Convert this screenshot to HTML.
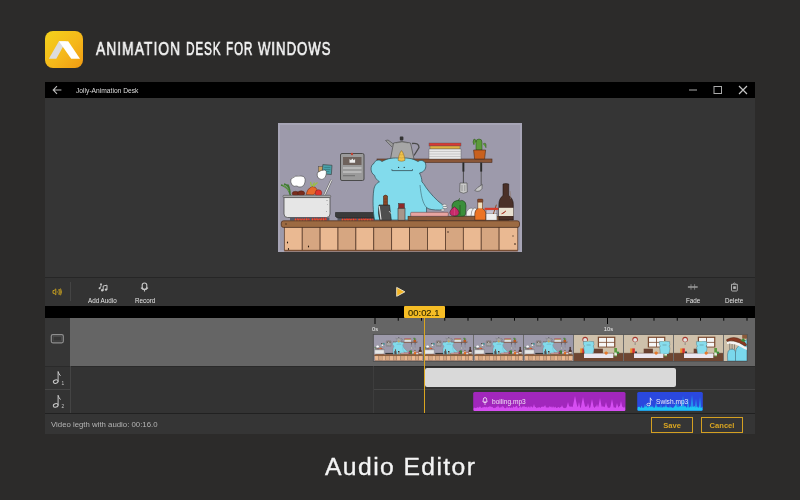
<!DOCTYPE html>
<html><head><meta charset="utf-8">
<style>
*{margin:0;padding:0;box-sizing:border-box}
html,body{width:800px;height:500px;overflow:hidden;background:#2c2b2a;font-family:"Liberation Sans",sans-serif}
.a{position:absolute}
.t{position:absolute;white-space:nowrap;line-height:1;will-change:transform}
</style></head><body>
<svg style="position:absolute;width:0;height:0">
<defs>
<symbol id="kitchen" viewBox="0 0 244 129" preserveAspectRatio="none">
<rect width="244" height="129" fill="#9d9aab"/><rect x="1" y="1" width="242" height="127" fill="none" stroke="#a7a5b6" stroke-width="2"/>
<!-- recipe card -->
<rect x="62.5" y="30.5" width="23.5" height="27" rx="1.5" fill="#9a9a9a" stroke="#4a4a4a" stroke-width="1"/>
<rect x="65" y="34" width="18.5" height="8" fill="#6e625c"/>
<path d="M71.5,36 l1.5,1.2 l1.3,-1.6 l1.3,1.6 l1.5,-1.2 v3.8 h-5.6z" fill="#eee"/>
<rect x="65" y="44" width="18.5" height="2" fill="#b8b8b8"/>
<rect x="65" y="48" width="18.5" height="2" fill="#b8b8b8"/>
<rect x="65" y="52" width="12" height="1.3" fill="#777"/>
<circle cx="74" cy="31" r="1.2" fill="#c04030"/>
<!-- sticky notes -->
<rect x="40.4" y="43.6" width="5.4" height="6" fill="#c8a060" stroke="#4a4a4a" stroke-width="0.5"/>
<rect x="44.5" y="41.9" width="9.2" height="9.3" fill="#4aa0a8" stroke="#3a3a3a" stroke-width="0.6" transform="rotate(4 49 46.5)"/>
<path d="M46.3,44.5 h6 M46.3,46.5 h6 M46.3,48.5 h5" stroke="#2a6a70" stroke-width="0.5"/>
<path d="M39.5,49.5 q4,-3 7.5,-2.5 q2,1 1.3,4 q-0.5,4 -3.3,5.2 q-2,0.6 -3.5,-0.5 q-2.5,-1 -2.3,-3.5 q0,-1.5 0.3,-2.7z" fill="#fff" stroke="#444" stroke-width="0.6"/>
<!-- steam blob -->
<path d="M13,56 q4,-4 10,-3 q5,0 4,6 q-1,5 -5,5 q-2,0 -3,-1 q-3,1 -5,-1 q-2,-3 -1,-6z" fill="#fff" stroke="#444" stroke-width="0.6"/>
<!-- leek -->
<path d="M3,62 q5,1 8,6 l1.5,4.5 M6,61 q4,1 5.5,5 M9.5,61.5 q2.5,3 2.5,10" stroke="#3e7a30" stroke-width="1.5" fill="none"/>
<path d="M4.5,62 q4,1.5 6.5,6" stroke="#8ac060" stroke-width="0.6" fill="none"/>
<!-- pot contents -->
<ellipse cx="17.5" cy="70.6" rx="3.3" ry="2.3" fill="#7a2c1c" stroke="#3a1a10" stroke-width="0.4"/>
<ellipse cx="23.2" cy="70.3" rx="3.5" ry="2.5" fill="#7a2c1c" stroke="#3a1a10" stroke-width="0.4"/>
<path d="M28,71.5 q1,-6 6,-8 q4,0 5,3 q0,4 -4,5.5z" fill="#e8682a" stroke="#5a2a1a" stroke-width="0.5"/>
<path d="M33.5,63.5 l-1,-4.5 M35,63.5 l4.5,-4 M34.5,63 l2,-3.5" stroke="#9ac040" stroke-width="1.2"/>
<circle cx="40.5" cy="70" r="3.3" fill="#e0342e" stroke="#5a1a1a" stroke-width="0.4"/>
<path d="M46.5,72 L53.5,57" stroke="#555" stroke-width="2"/>
<path d="M46.5,72 L53.5,57" stroke="#e8e8e8" stroke-width="1.1"/>
<!-- pot -->
<path d="M6,74.5 h46 v16.5 q0,3.5 -3.5,3.5 h-39 q-3.5,0 -3.5,-3.5z" fill="#e6e6e6" stroke="#4a4a4a" stroke-width="0.8"/>
<rect x="5" y="72.3" width="47.7" height="2.3" rx="1" fill="#a8a8a8" stroke="#444" stroke-width="0.5"/>
<path d="M49,77 v1 M49.5,81 v0.6 M48.5,88 v0.8" stroke="#666" stroke-width="0.6"/>
<!-- flames -->
<rect x="12" y="94.6" width="39.4" height="3" fill="#555a66"/><rect x="59.5" y="94.6" width="37.5" height="3" fill="#555a66"/>
<path d="M16.4,97.6 q0.6,-2.6 1.2,-2.6 q0.6,0 1.2,2.6z" fill="#e8382a"/><path d="M18.6,97.6 q0.6,-2.8 1.2,-2.8 q0.6,0 1.2,2.8z" fill="#e8382a"/><path d="M20.8,97.6 q0.6,-2.7 1.2,-2.7 q0.6,0 1.2,2.7z" fill="#e8382a"/><path d="M23.0,97.6 q0.6,-2.7 1.2,-2.7 q0.6,0 1.2,2.7z" fill="#e8382a"/><path d="M25.2,97.6 q0.6,-2.7 1.2,-2.7 q0.6,0 1.2,2.7z" fill="#e8382a"/><path d="M27.4,97.6 q0.6,-3.0 1.2,-3.0 q0.6,0 1.2,3.0z" fill="#e8382a"/><path d="M29.6,97.6 q0.6,-2.5 1.2,-2.5 q0.6,0 1.2,2.5z" fill="#e8382a"/><path d="M16.9,97.2 H30.1" stroke="#f8b040" stroke-width="0.9" stroke-dasharray="1.2 1.6"/><path d="M33.3,97.6 q0.6,-2.9 1.2,-2.9 q0.6,0 1.2,2.9z" fill="#e8382a"/><path d="M35.5,97.6 q0.6,-3.0 1.2,-3.0 q0.6,0 1.2,3.0z" fill="#e8382a"/><path d="M37.7,97.6 q0.6,-3.2 1.2,-3.2 q0.6,0 1.2,3.2z" fill="#e8382a"/><path d="M39.9,97.6 q0.6,-2.5 1.2,-2.5 q0.6,0 1.2,2.5z" fill="#e8382a"/><path d="M42.1,97.6 q0.6,-3.0 1.2,-3.0 q0.6,0 1.2,3.0z" fill="#e8382a"/><path d="M44.3,97.6 q0.6,-3.3 1.2,-3.3 q0.6,0 1.2,3.3z" fill="#e8382a"/><path d="M46.5,97.6 q0.6,-3.3 1.2,-3.3 q0.6,0 1.2,3.3z" fill="#e8382a"/><path d="M33.8,97.2 H47.0" stroke="#f8b040" stroke-width="0.9" stroke-dasharray="1.2 1.6"/><path d="M63.3,97.6 q0.6,-2.7 1.2,-2.7 q0.6,0 1.2,2.7z" fill="#e8382a"/><path d="M65.5,97.6 q0.6,-2.6 1.2,-2.6 q0.6,0 1.2,2.6z" fill="#e8382a"/><path d="M67.7,97.6 q0.6,-3.3 1.2,-3.3 q0.6,0 1.2,3.3z" fill="#e8382a"/><path d="M69.9,97.6 q0.6,-2.8 1.2,-2.8 q0.6,0 1.2,2.8z" fill="#e8382a"/><path d="M72.1,97.6 q0.6,-2.3 1.2,-2.3 q0.6,0 1.2,2.3z" fill="#e8382a"/><path d="M74.3,97.6 q0.6,-3.1 1.2,-3.1 q0.6,0 1.2,3.1z" fill="#e8382a"/><path d="M76.5,97.6 q0.6,-2.3 1.2,-2.3 q0.6,0 1.2,2.3z" fill="#e8382a"/><path d="M63.8,97.2 H77.0" stroke="#f8b040" stroke-width="0.9" stroke-dasharray="1.2 1.6"/><path d="M80.0,97.6 q0.6,-2.5 1.2,-2.5 q0.6,0 1.2,2.5z" fill="#e8382a"/><path d="M82.2,97.6 q0.6,-2.9 1.2,-2.9 q0.6,0 1.2,2.9z" fill="#e8382a"/><path d="M84.4,97.6 q0.6,-3.0 1.2,-3.0 q0.6,0 1.2,3.0z" fill="#e8382a"/><path d="M86.6,97.6 q0.6,-3.4 1.2,-3.4 q0.6,0 1.2,3.4z" fill="#e8382a"/><path d="M88.8,97.6 q0.6,-2.6 1.2,-2.6 q0.6,0 1.2,2.6z" fill="#e8382a"/><path d="M91.0,97.6 q0.6,-2.8 1.2,-2.8 q0.6,0 1.2,2.8z" fill="#e8382a"/><path d="M93.2,97.6 q0.6,-2.6 1.2,-2.6 q0.6,0 1.2,2.6z" fill="#e8382a"/><path d="M80.5,97.2 H94.5" stroke="#f8b040" stroke-width="0.9" stroke-dasharray="1.2 1.6"/>
<!-- pan -->
<path d="M57.5,89.5 h42 l1,4 q-1,1.5 -4,1.5 h-35 q-3,0 -4,-1.5z" fill="#3a3a3a" stroke="#1e1e1e" stroke-width="0.6"/>
<path d="M100,91 h8" stroke="#555" stroke-width="2"/>
<!-- shelf -->
<rect x="99" y="36" width="115" height="3.4" fill="#8a5638" stroke="#4a2a1a" stroke-width="0.6"/>
<!-- kettle -->
<path d="M114,24 L107.5,17.5 L110,17 L115.5,21" fill="#9a9a9a" stroke="#4a4a4a" stroke-width="0.6"/>
<path d="M134,20.5 q7,-1 7,4 l-5,8" stroke="#4a4a4a" stroke-width="1.3" fill="none"/>
<path d="M112.5,36 L115.5,20 q8.5,-3 17,0 L136,36z" fill="#a6a6a6" stroke="#4a4a4a" stroke-width="0.7"/>
<path d="M118,20 q6,-2 12,0" stroke="#666" stroke-width="0.5" fill="none"/>
<rect x="121.8" y="13.6" width="3.6" height="3.8" rx="0.8" fill="#333"/>
<!-- plates -->
<rect x="151" y="20" width="32" height="3" fill="#d83a34" stroke="#555" stroke-width="0.4"/>
<rect x="152" y="23" width="30" height="3" fill="#e0b040" stroke="#555" stroke-width="0.4"/>
<rect x="151" y="26" width="32" height="10" fill="#e8e8e8" stroke="#555" stroke-width="0.4"/>
<path d="M151,28.5 h32 M151,31 h32 M151,33.5 h32" stroke="#999" stroke-width="0.4"/>
<!-- cactus -->
<path d="M198,27 v-8 q0,-3 3,-3 q3,0 3,3 v8z M196,22 q-2,-3 0,-6 q2,0 2,3 M205,21 q3,-2 3,1 v3" fill="#5c9a3a" stroke="#2a4a1a" stroke-width="0.5"/>
<path d="M195.6,27 h12 l-1,9 h-10z" fill="#c8601e" stroke="#4a2a1a" stroke-width="0.6"/>
<!-- utensils -->
<path d="M185.4,39.4 v21" stroke="#444" stroke-width="0.9"/>
<path d="M185.4,39.6 v9" stroke="#2a2a2a" stroke-width="1.9"/>
<path d="M182,60 h7 l0.3,9 q-3.8,2.5 -7.6,0z" fill="#c8c8c8" stroke="#444" stroke-width="0.6"/>
<path d="M184,62 v6 M186.8,62 v6" stroke="#777" stroke-width="0.6"/>
<path d="M203.2,39.4 v24" stroke="#555" stroke-width="0.9"/>
<path d="M203.2,39.6 v9" stroke="#2a2a2a" stroke-width="1.9"/>
<path d="M204.3,61.5 q0.5,5 -2.5,6.5 q-3,1 -5,-0.5 q2,-3 7.5,-6z" fill="#c8c8c8" stroke="#444" stroke-width="0.6"/>
<!-- monster -->
<path d="M96.6,52.4 C92,50 92,42 96,40.4 C97,37 101,36 104,38.5 C110,35 116,34.5 122.2,35.3 C128,34.5 134,35 140,38.5 C143,36 148,38 147.8,42.5 C148,46 146,49 141.5,50 C143,53 144,56 143.9,58.8 C146,61 147,63 148,64.5 C152,70 158,77 164,81.3 C166,82 168,83 167,85.5 C165.5,86.5 163.5,87 161.5,87 C156,87 151,86.8 148.5,84.5 L148.7,97 L96.6,97 C95,90 94.5,75 95.8,66.8 C96.5,62 99,60 101.4,58.8 C99,57 97,55 96.6,52.4 Z" fill="#82dbec" stroke="#2e4a52" stroke-width="0.7"/>
<path d="M142,62 C143,72 144.5,80 148.5,84.5" stroke="#2e4a52" stroke-width="0.5" fill="none"/>
<path d="M120,37.3 C120.5,33 122,29 123.5,27.6 C125,29 126.5,33 127,37.3 C124.5,38.5 122.5,38.5 120,37.3Z" fill="#f0c24a" stroke="#7a5a20" stroke-width="0.5"/>
<path d="M121,34.5 q2.5,1 5,0 M121.8,31.5 q1.8,0.8 3.4,0" stroke="#b08a30" stroke-width="0.4" fill="none"/>
<path d="M114.2,47.8 q-0.8,-0.8 -0.2,-1.6 M114.2,47.6 h20 M134.2,47.8 q0.8,-0.8 0.2,-1.6" stroke="#2a3a40" stroke-width="0.7" fill="none"/>
<circle cx="120.6" cy="44.4" r="0.6" fill="#2a3a40"/><circle cx="126.2" cy="44.4" r="0.6" fill="#2a3a40"/>
<ellipse cx="166.5" cy="82.3" rx="2.3" ry="1.1" fill="#eee" stroke="#555" stroke-width="0.4"/><ellipse cx="167" cy="84.6" rx="2.3" ry="1.1" fill="#eee" stroke="#555" stroke-width="0.4"/><ellipse cx="164.8" cy="87" rx="2" ry="1" fill="#eee" stroke="#555" stroke-width="0.4"/>
<!-- cleaver -->
<path d="M101,82 l10.5,0 l1.8,15.3 h-11.5 q-2.3,-7 -0.8,-15.3z" fill="#4e4e4e" stroke="#1e1e1e" stroke-width="0.6"/>
<path d="M101.2,83 l1.8,13.5" stroke="#e6e6e6" stroke-width="1.1"/>
<path d="M111,88 l2.5,3" stroke="#ccc" stroke-width="0.8"/>
<path d="M105.5,82 v-9 q2,-1.8 4,0 v9z" fill="#8a4a2a" stroke="#3a1a0a" stroke-width="0.5"/>
<path d="M106.2,76 h2.6 M106.2,79 h2.6" stroke="#5a2a1a" stroke-width="0.4"/>
<!-- shaker -->
<path d="M120,85 h7 v12.3 h-7z" fill="#a8968a" stroke="#333" stroke-width="0.6"/>
<rect x="120.6" y="80.6" width="5.8" height="4.6" fill="#8e2a2a" stroke="#333" stroke-width="0.5"/>
<!-- boards -->
<rect x="130" y="93.2" width="101" height="4.2" fill="#8a5a3a" stroke="#3a2a1a" stroke-width="0.5"/>
<rect x="132.6" y="89.3" width="37.7" height="4" rx="1" fill="#e8a4a0" stroke="#5a3a3a" stroke-width="0.5"/>
<!-- pepper & onion -->
<path d="M174,82 q1,-4 5,-4.5 q2,-0.5 3,0.5 q1,-1 3,-0.3 q3,1 3,5 l-0.5,8.5 q-0.5,2 -2.5,2 h-8 q-2.5,0 -2.8,-2.5z" fill="#3a8e3a" stroke="#1e3a1a" stroke-width="0.6"/>
<path d="M180.5,78 q0,-2 1.5,-2.5 M182,82 v10" stroke="#2a5a22" stroke-width="0.9" fill="none"/>
<path d="M176.4,83.8 q-4.5,3 -4.6,5.5 q0,3.7 4.6,3.7 q4.6,0 4.6,-3.7 q0,-2.5 -4.6,-5.5z" fill="#c82a6a" stroke="#3a1a2a" stroke-width="0.5"/>
<path d="M176.4,85 v7" stroke="#e070a0" stroke-width="0.4"/>
<!-- eggs -->
<path d="M188.2,93 q-0.5,-5 3,-7.5 q3,-1.5 4,1 l-1.5,6.5z" fill="#f2f2f2" stroke="#555" stroke-width="0.5"/>
<path d="M193,93 q0,-6 3,-8 q3,-0.5 3,2 v6z" fill="#f2f2f2" stroke="#555" stroke-width="0.5"/>
<!-- sauce bottle -->
<path d="M199.9,79 h4.6 v6.5 q3.3,1.5 3.3,5 v6.6 h-11 v-6.6 q0,-3.5 3.1,-5z" fill="#ec7424" stroke="#4a2a1a" stroke-width="0.6"/>
<rect x="200.2" y="79.3" width="4" height="6" fill="#efe2c4"/>
<rect x="199.5" y="76.1" width="5.4" height="3" rx="0.8" fill="#8a4a2a" stroke="#3a1a0a" stroke-width="0.4"/>
<!-- box -->
<rect x="208.1" y="86.9" width="10.8" height="10.2" fill="#c6c4d4" stroke="#555" stroke-width="0.4"/>
<rect x="208.1" y="90.4" width="10.8" height="6.7" fill="#eeeeee" stroke="#555" stroke-width="0.4"/>
<path d="M215.3,91 L218.4,81.7" stroke="#8a4a2a" stroke-width="1"/>
<rect x="206.6" y="84.8" width="13.8" height="2.1" fill="#d83a2a"/>
<!-- wine bottle -->
<path d="M225,61 q2.8,-0.8 5.7,0 v11.5 q4.6,3 4.6,9 v15.6 h-14.4 v-15.6 q0,-6 4.1,-9z" fill="#4a3028" stroke="#1e1410" stroke-width="0.6"/>
<rect x="221" y="84.8" width="14.3" height="8.2" fill="#e8e0d0"/>
<path d="M223.5,90.8 q2.5,-0.5 4.5,-3" stroke="#c03a2a" stroke-width="1"/>
<path d="M232,68 q1,4 0.5,8" stroke="#8a7060" stroke-width="0.5" fill="none"/>
<!-- counter -->
<rect x="3.3" y="97.8" width="238.2" height="6.6" rx="2.2" fill="#9c6a42" stroke="#4a2a1a" stroke-width="0.7"/>
<g stroke="#4e3222" stroke-width="0.7"><rect x="6.3" y="104.4" width="17.9" height="22.8" fill="#eab992"/><rect x="24.2" y="104.4" width="17.9" height="22.8" fill="#d6a681"/><rect x="42.1" y="104.4" width="17.9" height="22.8" fill="#eab992"/><rect x="60.0" y="104.4" width="17.9" height="22.8" fill="#d6a681"/><rect x="77.9" y="104.4" width="17.9" height="22.8" fill="#eab992"/><rect x="95.8" y="104.4" width="17.9" height="22.8" fill="#d6a681"/><rect x="113.7" y="104.4" width="17.9" height="22.8" fill="#eab992"/><rect x="131.6" y="104.4" width="17.9" height="22.8" fill="#d6a681"/><rect x="149.5" y="104.4" width="17.9" height="22.8" fill="#eab992"/><rect x="167.4" y="104.4" width="17.9" height="22.8" fill="#d6a681"/><rect x="185.3" y="104.4" width="17.9" height="22.8" fill="#eab992"/><rect x="203.2" y="104.4" width="17.9" height="22.8" fill="#d6a681"/><rect x="221.1" y="104.4" width="18.7" height="22.8" fill="#eab992"/></g>
<g fill="#2a1a10"><ellipse cx="9.5" cy="119.5" rx="0.6" ry="0.9"/><ellipse cx="10.5" cy="126" rx="0.6" ry="0.9"/><ellipse cx="30.5" cy="123.5" rx="0.6" ry="0.9"/><ellipse cx="170" cy="109" rx="0.5" ry="0.9"/><ellipse cx="235" cy="113" rx="0.5" ry="0.7"/><ellipse cx="237" cy="121" rx="0.6" ry="1"/><ellipse cx="8" cy="101" rx="0.6" ry="0.7"/></g>
<rect x="6.3" y="127.2" width="233.5" height="1.2" fill="#7a4a2a"/>
</symbol>
<symbol id="roombase" viewBox="0 0 49 26.5" preserveAspectRatio="none">
<rect width="49" height="26.5" fill="#cfc1ab"/>
<rect x="23.8" y="2.2" width="17.2" height="10.8" fill="#7a4a30"/>
<rect x="25" y="3.4" width="7" height="4" fill="#f6f6f6"/><rect x="32.8" y="3.4" width="7" height="4" fill="#f6f6f6"/>
<rect x="25" y="8.2" width="7" height="3.9" fill="#f6f6f6"/><rect x="32.8" y="8.2" width="7" height="3.9" fill="#f6f6f6"/>
<circle cx="11.4" cy="4.9" r="2.7" fill="#a8382e"/><circle cx="11.4" cy="5.4" r="1.9" fill="#e4e4e4"/>
<path d="M11.4,7.5 v3" stroke="#555" stroke-width="0.5"/>
<rect x="19.8" y="14.2" width="9" height="5.3" fill="#6a4030"/>
<rect x="6.6" y="13.9" width="2.2" height="6.4" fill="#e8902a"/><rect x="8.6" y="13.9" width="2.5" height="6.7" fill="#d8302a"/>
<rect x="11.2" y="17" width="2" height="3" fill="#2a3a4a"/>
<circle cx="32" cy="18.8" r="1.5" fill="#e8782a"/>
<rect x="0" y="18.8" width="49" height="7.7" fill="#6e4632"/>
<path d="M0,18.8 h49" stroke="#4a2a1a" stroke-width="0.5"/>
<rect x="10.3" y="19.1" width="28.7" height="4.4" fill="#ebe6ef"/>
</symbol>
<symbol id="mon" viewBox="0 0 12 13" preserveAspectRatio="none">
<path d="M1,2 q-1,-2 1.5,-1.5 q3.5,-1 7,0 q2.5,-0.5 1.5,1.5 q1,2 -0.5,3 q1.5,2 0.5,5 l-1,3 h-8 l-0.5,-4 q-1,-3 0.5,-4 q-1.5,-1 -1,-3z" fill="#86dcec" stroke="#4a6a74" stroke-width="0.4"/>
<path d="M4,4 h4" stroke="#4a6a74" stroke-width="0.4"/>
<path d="M5.5,-0.5 l0.8,1 l-1.6,0z" fill="#f0c24a"/>
</symbol>
<symbol id="close" viewBox="0 0 23.5 26.5" preserveAspectRatio="none">
<rect width="23.5" height="26.5" fill="#cfc1ab"/>
<rect x="18.7" y="0" width="4.8" height="4.2" fill="#8a5a3a"/>
<path d="M11.8,26.5 q-0.5,-8 0.8,-12 q3,-5 8,-7.5 l3,-2 v21.5z" fill="#7ad8ec" stroke="#2a4a5a" stroke-width="0.4"/>
<path d="M4.2,26.5 q-0.8,-7 0.5,-10 q2,-2.5 4.5,-2 q2.6,0.5 2.8,3 v9z" fill="#7ad8ec" stroke="#2a4a5a" stroke-width="0.4"/>
<path d="M3.5,9.5 q8,-1 13,2.5 q4,2.5 7,3.5 v-2.5 q-4,-2 -7,-4 q-6,-3 -13,-2z" fill="#f4f4f4"/>
<path d="M3.2,5 q7,-4 14,0 q4,2 6,5 q-0.5,2 -2,1.5 q-5,-4 -11,-5 q-4,-0.5 -6.5,0.5 q-1,-1 -0.5,-2z" fill="#8a3a22" stroke="#3a1a10" stroke-width="0.4"/>
<path d="M17,6 l3,-2.2 l2,2.5 l-2,1.2z" fill="#3a8a3a"/>
<path d="M6.2,9 v6 M8.6,9.5 v5.5 M11,10 v5" stroke="#555" stroke-width="0.6"/>
</symbol>
</defs>
</svg>

<!-- logo -->
<div class="a" style="left:45.2px;top:31.4px;width:37.9px;height:36.7px;border-radius:8px;background:linear-gradient(135deg,#f3d21c 0%,#f5b81a 55%,#f09a12 100%)"></div>
<svg class="a" style="left:0;top:0" width="800" height="100">
<polygon points="48.8,58.8 58.9,41.2 66,41.2 56.3,58.8" fill="#dcdcdc"/>
<polygon points="58.9,41.2 68.2,41.2 80,58.8 71.2,58.8" fill="#fff"/>
</svg>
<div class="t" style="left:96.00px;top:40.7px;font-size:17.8px;letter-spacing:1.3px;-webkit-text-stroke:0.65px #f2f2f2;color:#f2f2f2;transform:scaleX(0.7794);transform-origin:0 0">ANIMATION</div>
<div class="t" style="left:186.24px;top:40.7px;font-size:17.8px;letter-spacing:1.3px;-webkit-text-stroke:0.65px #f2f2f2;color:#f2f2f2;transform:scaleX(0.6608);transform-origin:0 0">DESK</div>
<div class="t" style="left:225.59px;top:40.7px;font-size:17.8px;letter-spacing:1.3px;-webkit-text-stroke:0.65px #f2f2f2;color:#f2f2f2;transform:scaleX(0.6577);transform-origin:0 0">FOR</div>
<div class="t" style="left:257.50px;top:40.7px;font-size:17.8px;letter-spacing:1.3px;-webkit-text-stroke:0.65px #f2f2f2;color:#f2f2f2;transform:scaleX(0.7423);transform-origin:0 0">WINDOWS</div>


<!-- window -->
<div class="a" style="left:45px;top:82px;width:710px;height:352px;background:#353535"></div>
<div class="a" style="left:45px;top:82px;width:710px;height:16px;background:#000"></div>
<svg class="a" style="left:45px;top:82px" width="710" height="16">
<path d="M8.2,8 H16.4 M12,4.2 L8.2,8 L12,11.8" stroke="#bbb" stroke-width="1.1" fill="none"/>
<path d="M644,8 H652" stroke="#aaa" stroke-width="1"/>
<rect x="669" y="4.5" width="7.5" height="7" stroke="#aaa" stroke-width="1" fill="none"/>
<path d="M694,4 L702,12 M702,4 L694,12" stroke="#c4c4c4" stroke-width="1.2"/>
</svg>
<div class="t" style="left:76px;top:87.8px;font-size:6.7px;color:#ddd">Jolly-Animation Desk</div>

<!-- preview area -->
<svg class="a" style="left:278px;top:123px" width="244" height="129"><use href="#kitchen" width="244" height="129"/></svg>

<!-- separator + toolbar -->
<div class="a" style="left:45px;top:277px;width:710px;height:1px;background:#262626"></div>
<div class="a" style="left:45px;top:278px;width:710px;height:28px;background:#333"></div>
<div class="a" style="left:70px;top:282px;width:1px;height:19px;background:#444"></div>
<svg class="a" style="left:45px;top:278px" width="710" height="28">
<!-- speaker -->
<path d="M8,12.5 h1.1 l1.7,-1.6 v6 l-1.7,-1.6 h-1.1z" stroke="#c29c20" stroke-width="1" fill="none"/>
<circle cx="12.3" cy="13.9" r="0.55" fill="#c29c20"/>
<path d="M13.7,11.3 q1.3,2.6 0,5.2 M15.5,10.5 q2.1,3.4 0,6.8 M14.6,11 q1.7,2.9 0,5.8" stroke="#c29c20" stroke-width="0.9" fill="none"/>
<!-- add audio -->
<path d="M58.2,8 l3.8,-0.8 v4.4 M58.2,8 v4.6" stroke="#c8c8c8" stroke-width="1" fill="none"/>
<circle cx="57.2" cy="12.3" r="1.2" fill="#c8c8c8"/><circle cx="61" cy="11.6" r="1.2" fill="#c8c8c8"/>
<path d="M56,6 v2.2 l-1.3,2" stroke="#c8c8c8" stroke-width="1" fill="none"/>
<circle cx="56" cy="6.2" r="0.9" fill="#c8c8c8"/><circle cx="54.6" cy="10.3" r="1" fill="#c8c8c8"/>
<!-- mic -->
<rect x="97.2" y="5" width="4.6" height="6.2" rx="2.3" stroke="#c8c8c8" stroke-width="1.1" fill="none"/>
<path d="M96,9.6 q3.5,4.4 7,0 M99.5,12.2 v1.3" stroke="#c8c8c8" stroke-width="1.1" fill="none"/>
<!-- play -->
<polygon points="351.7,9.4 351.7,18.3 359.9,13.85" fill="#f4b624" stroke="#efe6cc" stroke-width="0.9" stroke-linejoin="round"/>
<!-- fade -->
<path d="M642.9,9 h9.8" stroke="#c4c4c4" stroke-width="1.1"/>
<path d="M646,6.2 v5.5 M649.6,6.2 v5.5" stroke="#999" stroke-width="0.7"/>
<!-- delete -->
<path d="M686.5,6.3 h5.8 v6 q0,0.7 -0.7,0.7 h-4.4 q-0.7,0 -0.7,-0.7z" stroke="#bbb" stroke-width="0.9" fill="none"/>
<path d="M688.3,5.6 q1.1,-1.2 2.2,0" stroke="#bbb" stroke-width="0.9" fill="none"/>
<rect x="688.2" y="8.3" width="2.6" height="2.6" fill="#bbb"/>
</svg>
<div class="t" style="left:88px;top:298.2px;font-size:6.3px;color:#e4e4e4">Add Audio</div>
<div class="t" style="left:135px;top:298.2px;font-size:6.3px;color:#e4e4e4">Record</div>
<div class="t" style="left:685.5px;top:298.2px;font-size:6.3px;color:#e4e4e4">Fade</div>
<div class="t" style="left:725px;top:298.2px;font-size:6.3px;color:#e4e4e4">Delete</div>

<!-- ruler -->
<div class="a" style="left:45px;top:306px;width:710px;height:12px;background:#000"></div>
<!-- video row -->
<div class="a" style="left:45px;top:318px;width:25px;height:48px;background:#363636"></div>
<div class="a" style="left:70px;top:318px;width:685px;height:48px;background:#656565"></div>
<svg class="a" style="left:45px;top:318px" width="30" height="47">
<rect x="6.3" y="16.6" width="12" height="8.2" stroke="#8e8e8e" stroke-width="1.2" fill="none" rx="1.5"/>
<rect x="8.2" y="18.4" width="8.2" height="4.6" stroke="#4e4e4e" stroke-width="0.8" fill="none"/>
</svg>
<svg class="a" style="left:0;top:0" width="800" height="500">
<rect x="374.50" y="318" width="1" height="6" fill="#000"/><rect x="397.75" y="318" width="1" height="2.7" fill="#000"/><rect x="421.00" y="318" width="1" height="2.7" fill="#000"/><rect x="444.25" y="318" width="1" height="2.7" fill="#000"/><rect x="467.50" y="318" width="1" height="2.7" fill="#000"/><rect x="490.75" y="318" width="1" height="2.7" fill="#000"/><rect x="514.00" y="318" width="1" height="2.7" fill="#000"/><rect x="537.25" y="318" width="1" height="2.7" fill="#000"/><rect x="560.50" y="318" width="1" height="2.7" fill="#000"/><rect x="583.75" y="318" width="1" height="2.7" fill="#000"/><rect x="607.00" y="318" width="1" height="6" fill="#000"/><rect x="630.25" y="318" width="1" height="2.7" fill="#000"/><rect x="653.50" y="318" width="1" height="2.7" fill="#000"/><rect x="676.75" y="318" width="1" height="2.7" fill="#000"/><rect x="700.00" y="318" width="1" height="2.7" fill="#000"/><rect x="723.25" y="318" width="1" height="2.7" fill="#000"/><rect x="746.50" y="318" width="1" height="2.7" fill="#000"/>
<svg x="373.50" y="334.5" width="50.00" height="26.5" viewBox="0 0 50.00 26.5" preserveAspectRatio="none"><use href="#kitchen" width="50.00" height="26.5"/></svg><svg x="423.50" y="334.5" width="50.00" height="26.5" viewBox="0 0 50.00 26.5" preserveAspectRatio="none"><use href="#kitchen" width="50.00" height="26.5"/></svg><svg x="473.50" y="334.5" width="50.00" height="26.5" viewBox="0 0 50.00 26.5" preserveAspectRatio="none"><use href="#kitchen" width="50.00" height="26.5"/></svg><svg x="523.50" y="334.5" width="50.00" height="26.5" viewBox="0 0 50.00 26.5" preserveAspectRatio="none"><use href="#kitchen" width="50.00" height="26.5"/></svg><svg x="573.50" y="334.5" width="50" height="26.5" viewBox="0 0 49 26.5" preserveAspectRatio="none"><use href="#roombase" width="49" height="26.5"/><rect x="40" y="13.5" width="2.6" height="8.5" fill="#5a9a3a"/><rect x="40" y="18" width="2.6" height="3" fill="#e8e8e0"/><circle cx="43.5" cy="18.2" r="1.3" fill="#3a8a3a"/><use href="#mon" x="8.8" y="6.5" width="12" height="13"/><rect x="10.3" y="19.1" width="28.7" height="2" fill="#ebe6ef"/><circle cx="32" cy="18.6" r="1.6" fill="#e8782a"/></svg><svg x="623.50" y="334.5" width="50" height="26.5" viewBox="0 0 49 26.5" preserveAspectRatio="none"><use href="#roombase" width="49" height="26.5"/><rect x="40" y="13.5" width="2.6" height="8.5" fill="#5a9a3a"/><rect x="40" y="18" width="2.6" height="3" fill="#e8e8e0"/><circle cx="43.5" cy="18.2" r="1.3" fill="#3a8a3a"/><use href="#mon" x="34.2" y="6.5" width="12" height="13"/><rect x="10.3" y="19.1" width="28.7" height="2" fill="#ebe6ef"/><circle cx="32" cy="18.6" r="1.6" fill="#e8782a"/></svg><svg x="673.50" y="334.5" width="50" height="26.5" viewBox="0 0 49 26.5" preserveAspectRatio="none"><use href="#roombase" width="49" height="26.5"/><rect x="40" y="13.5" width="2.6" height="8.5" fill="#5a9a3a"/><rect x="40" y="18" width="2.6" height="3" fill="#e8e8e0"/><circle cx="43.5" cy="18.2" r="1.3" fill="#3a8a3a"/><use href="#mon" x="21.5" y="6.5" width="12" height="13"/><rect x="10.3" y="19.1" width="28.7" height="2" fill="#ebe6ef"/><circle cx="32" cy="18.6" r="1.6" fill="#e8782a"/></svg><svg x="723.50" y="334.5" width="23.50" height="26.5" viewBox="0 0 23.50 26.5" preserveAspectRatio="none"><use href="#close" width="23.50" height="26.5"/></svg><rect x="423.05" y="334.5" width="0.9" height="26.5" fill="#6a6a6a"/><rect x="473.05" y="334.5" width="0.9" height="26.5" fill="#6a6a6a"/><rect x="523.05" y="334.5" width="0.9" height="26.5" fill="#6a6a6a"/><rect x="573.05" y="334.5" width="0.9" height="26.5" fill="#6a6a6a"/><rect x="623.05" y="334.5" width="0.9" height="26.5" fill="#6a6a6a"/><rect x="673.05" y="334.5" width="0.9" height="26.5" fill="#6a6a6a"/><rect x="723.05" y="334.5" width="0.9" height="26.5" fill="#6a6a6a"/><rect x="373.2" y="334.3" width="374" height="27" fill="none" stroke="#4a4a4a" stroke-width="0.6"/>
<text x="372" y="331" font-size="5.8" fill="#eee" font-family="Liberation Sans">0s</text>
<text x="603.8" y="331" font-size="5.8" fill="#eee" font-family="Liberation Sans">10s</text>
</svg>
<!-- audio rows -->
<div class="a" style="left:45px;top:366px;width:710px;height:47px;background:#333"></div>
<div class="a" style="left:45px;top:366px;width:710px;height:1px;background:#2a2a2a"></div>
<div class="a" style="left:45px;top:389px;width:25px;height:1px;background:#454545"></div>
<div class="a" style="left:374px;top:389px;width:381px;height:1px;background:#454545"></div>
<div class="a" style="left:70px;top:366px;width:1px;height:47px;background:#444"></div>
<div class="a" style="left:372.8px;top:366px;width:1.6px;height:47px;background:#3d3d3d"></div>
<div class="a" style="left:45px;top:413px;width:710px;height:1px;background:#212121"></div>
<svg class="a" style="left:45px;top:366px" width="30" height="47">
<path d="M13.1,5.5 v10.2 M13.1,5.5 q0.8,2.8 2.4,4.3" stroke="#c8c8c8" stroke-width="1" fill="none"/>
<ellipse cx="10.7" cy="15.6" rx="2.4" ry="1.7" transform="rotate(-15 10.7 15.6)" stroke="#c8c8c8" stroke-width="1" fill="none"/>
<text x="16.6" y="18.6" font-size="4.8" fill="#c4c4c4" font-family="Liberation Sans">1</text>
<path d="M13.1,29.3 v10.2 M13.1,29.3 q0.8,2.8 2.4,4.3" stroke="#c8c8c8" stroke-width="1" fill="none"/>
<ellipse cx="10.7" cy="39.4" rx="2.4" ry="1.7" transform="rotate(-15 10.7 39.4)" stroke="#c8c8c8" stroke-width="1" fill="none"/>
<text x="16.6" y="42.4" font-size="4.8" fill="#c4c4c4" font-family="Liberation Sans">2</text>
</svg>

<!-- clips -->
<div class="a" style="left:424.7px;top:368px;width:251.5px;height:19.2px;background:#d9d9d9;border-radius:2px"></div>
<svg class="a" style="left:0;top:0" width="800" height="500">
<defs><clipPath id="cp1"><rect x="473.2" y="392" width="152.3" height="19" rx="1.5"/></clipPath><clipPath id="cp2"><rect x="637.2" y="392" width="65.6" height="18.8" rx="1.5"/></clipPath></defs>
<rect x="473.2" y="392" width="152.3" height="19" rx="1.5" fill="#a127bc"/>
<path clip-path="url(#cp1)" d="M473.50,411.00 L473.50,408.30 L474.00,408.14 L474.50,407.49 L475.00,407.72 L475.50,408.03 L476.00,408.34 L476.50,407.59 L477.00,408.12 L477.50,407.06 L478.00,407.36 L478.50,407.93 L479.00,406.91 L479.50,407.30 L480.00,406.00 L480.50,407.30 L481.00,407.40 L481.50,408.01 L482.00,407.92 L482.50,407.29 L483.00,407.27 L483.50,407.57 L484.00,406.59 L484.50,407.16 L485.00,406.72 L485.50,407.26 L486.00,407.49 L486.50,406.38 L487.00,407.31 L487.50,407.61 L488.00,407.08 L488.50,407.09 L489.00,406.47 L489.50,406.81 L490.00,405.73 L490.50,406.49 L491.00,407.18 L491.50,406.53 L492.00,407.16 L492.50,406.77 L493.00,407.61 L493.50,408.14 L494.00,407.86 L494.50,408.18 L495.00,407.56 L495.50,408.01 L496.00,407.26 L496.50,406.55 L497.00,407.40 L497.50,406.56 L498.00,405.00 L498.50,406.56 L499.00,407.50 L499.50,407.57 L500.00,407.79 L500.50,407.56 L501.00,406.61 L501.50,406.78 L502.00,407.94 L502.50,405.96 L503.00,405.71 L503.50,406.92 L504.00,407.17 L504.50,408.21 L505.00,408.10 L505.50,408.24 L506.00,408.23 L506.50,407.56 L507.00,406.00 L507.50,407.56 L508.00,407.83 L508.50,408.06 L509.00,406.39 L509.50,407.10 L510.00,408.07 L510.50,407.80 L511.00,407.64 L511.50,407.21 L512.00,407.87 L512.50,408.20 L513.00,406.57 L513.50,406.37 L514.00,407.32 L514.50,407.24 L515.00,406.99 L515.50,406.93 L516.00,405.50 L516.50,406.07 L517.00,405.98 L517.50,406.97 L518.00,408.19 L518.50,407.89 L519.00,407.58 L519.50,407.03 L520.00,405.70 L520.50,406.56 L521.00,407.41 L521.50,407.74 L522.00,406.59 L522.50,406.73 L523.00,406.20 L523.50,406.88 L524.00,405.00 L524.50,406.65 L525.00,406.82 L525.50,407.01 L526.00,406.89 L526.50,406.38 L527.00,407.48 L527.50,407.85 L528.00,406.29 L528.50,406.95 L529.00,406.40 L529.50,406.93 L530.00,408.32 L530.50,406.53 L531.00,406.27 L531.50,406.56 L532.00,407.32 L532.50,407.45 L533.00,407.31 L533.50,405.68 L534.00,404.00 L534.50,405.68 L535.00,406.94 L535.50,406.91 L536.00,407.19 L536.50,408.24 L537.00,407.71 L537.50,407.50 L538.00,407.85 L538.50,407.21 L539.00,407.38 L539.50,406.88 L540.00,407.55 L540.50,407.89 L541.00,407.13 L541.50,406.71 L542.00,406.71 L542.50,406.65 L543.00,406.52 L543.50,406.93 L544.00,406.51 L544.50,406.30 L545.00,405.00 L545.50,405.93 L546.00,407.41 L546.50,407.20 L547.00,407.87 L547.50,407.77 L548.00,406.81 L548.50,407.38 L549.00,407.80 L549.50,406.02 L550.00,406.68 L550.50,407.27 L551.00,406.09 L551.50,407.29 L552.00,407.38 L552.50,407.56 L553.00,406.00 L553.50,407.10 L554.00,407.75 L554.50,407.23 L555.00,407.34 L555.50,406.57 L556.00,407.81 L556.50,407.73 L557.00,408.16 L557.50,407.31 L558.00,407.45 L558.50,407.09 L559.00,407.00 L559.50,408.21 L560.00,407.30 L560.50,407.32 L561.00,406.94 L561.50,406.56 L562.00,405.00 L562.50,406.56 L563.00,406.95 L563.50,408.00 L564.00,407.68 L564.50,408.02 L565.00,408.14 L565.50,407.96 L566.00,407.53 L566.50,407.62 L567.00,405.75 L567.50,403.88 L568.00,402.00 L568.50,403.88 L569.00,405.75 L569.50,406.69 L570.00,406.27 L570.50,407.01 L571.00,406.16 L571.50,406.71 L572.00,406.66 L572.50,407.30 L573.00,405.38 L573.50,403.03 L574.00,400.69 L574.50,398.34 L575.00,396.00 L575.50,398.34 L576.00,400.69 L576.50,403.03 L577.00,405.38 L577.50,406.87 L578.00,406.69 L578.50,404.34 L579.00,402.00 L579.50,404.34 L580.00,406.69 L580.50,408.15 L581.00,406.72 L581.50,404.29 L582.00,401.86 L582.50,399.43 L583.00,397.00 L583.50,399.43 L584.00,401.86 L584.50,404.29 L585.00,406.22 L585.50,406.88 L586.00,406.53 L586.50,406.09 L587.00,407.17 L587.50,405.08 L588.00,403.00 L588.50,405.08 L589.00,406.40 L589.50,408.17 L590.00,407.69 L590.50,406.50 L591.00,404.00 L591.50,401.50 L592.00,399.00 L592.50,401.50 L593.00,404.00 L593.50,406.50 L594.00,407.18 L594.50,407.63 L595.00,407.51 L595.50,406.04 L596.00,407.09 L596.50,405.82 L597.00,404.00 L597.50,405.82 L598.00,407.61 L598.50,406.12 L599.00,403.42 L599.50,400.71 L600.00,398.00 L600.50,400.71 L601.00,403.42 L601.50,406.12 L602.00,407.31 L602.50,405.44 L603.00,407.20 L603.50,406.07 L604.00,407.36 L604.50,406.89 L605.00,406.33 L605.50,404.16 L606.00,402.00 L606.50,404.16 L607.00,406.00 L607.50,406.46 L608.00,408.17 L608.50,407.62 L609.00,407.69 L609.50,407.85 L610.00,407.43 L610.50,406.50 L611.00,404.00 L611.50,401.50 L612.00,399.00 L612.50,401.50 L613.00,404.00 L613.50,406.50 L614.00,408.09 L614.50,407.32 L615.00,407.31 L615.50,407.91 L616.00,407.17 L616.50,405.08 L617.00,403.00 L617.50,405.08 L618.00,406.32 L618.50,407.85 L619.00,406.54 L619.50,406.13 L620.00,405.81 L620.50,403.40 L621.00,401.00 L621.50,403.40 L622.00,405.81 L622.50,407.03 L623.00,406.93 L623.50,407.79 L624.00,407.17 L624.50,407.73 L625.00,406.07 L625.30,411.00Z" fill="#d64ef2"/>
<rect x="637.2" y="392" width="65.6" height="18.8" rx="1.5" fill="#2a48de"/>
<path clip-path="url(#cp2)" d="M637.50,410.80 L637.50,409.71 L638.00,409.49 L638.50,409.67 L639.00,409.69 L639.50,409.65 L640.00,409.58 L640.50,409.54 L641.00,409.35 L641.50,409.62 L642.00,409.55 L642.50,409.36 L643.00,409.26 L643.50,409.13 L644.00,409.29 L644.50,409.34 L645.00,409.44 L645.50,409.49 L646.00,409.66 L646.50,409.29 L647.00,409.19 L647.50,409.23 L648.00,409.43 L648.50,409.61 L649.00,409.55 L649.50,409.59 L650.00,409.53 L650.50,409.58 L651.00,408.55 L651.50,406.68 L652.00,404.80 L652.50,406.68 L653.00,408.55 L653.50,409.66 L654.00,409.30 L654.50,409.57 L655.00,409.32 L655.50,409.21 L656.00,409.36 L656.50,409.43 L657.00,409.49 L657.50,409.43 L658.00,409.53 L658.50,409.46 L659.00,409.45 L659.50,409.59 L660.00,408.18 L660.50,405.99 L661.00,403.80 L661.50,405.99 L662.00,408.18 L662.50,409.72 L663.00,409.64 L663.50,409.72 L664.00,409.65 L664.50,409.70 L665.00,409.59 L665.50,409.72 L666.00,409.52 L666.50,409.54 L667.00,409.53 L667.50,409.58 L668.00,409.33 L668.50,409.44 L669.00,408.55 L669.50,406.68 L670.00,404.80 L670.50,406.68 L671.00,408.55 L671.50,409.65 L672.00,409.78 L672.50,409.58 L673.00,409.43 L673.50,409.57 L674.00,409.64 L674.50,409.60 L675.00,409.48 L675.50,409.47 L676.00,409.68 L676.50,409.57 L677.00,407.80 L677.50,405.30 L678.00,402.80 L678.50,405.30 L679.00,407.80 L679.50,409.68 L680.00,409.61 L680.50,409.50 L681.00,409.42 L681.50,407.52 L682.00,403.61 L682.50,399.71 L683.00,395.80 L683.50,399.71 L684.00,403.61 L684.50,407.52 L685.00,409.36 L685.50,409.33 L686.00,409.68 L686.50,409.75 L687.00,405.93 L687.50,401.86 L688.00,397.80 L688.50,401.86 L689.00,405.93 L689.50,409.33 L690.00,409.60 L690.50,407.30 L691.00,403.13 L691.50,398.97 L692.00,394.80 L692.50,398.97 L693.00,403.13 L693.50,407.30 L694.00,409.19 L694.50,409.48 L695.00,406.30 L695.50,402.55 L696.00,398.80 L696.50,402.55 L697.00,406.30 L697.50,409.73 L698.00,409.60 L698.50,409.40 L699.00,405.55 L699.50,401.18 L700.00,396.80 L700.50,401.18 L701.00,405.55 L701.50,409.49 L702.00,409.45 L702.50,409.46 L702.60,410.80Z" fill="#22b0f2" opacity="0.7"/>
<path clip-path="url(#cp2)" d="M637.50,410.80 L637.50,407.76 L638.00,406.99 L638.50,406.80 L639.00,407.25 L639.50,406.62 L640.00,407.59 L640.50,407.48 L641.00,407.96 L641.50,405.78 L642.00,406.27 L642.50,408.08 L643.00,407.83 L643.50,407.58 L644.00,407.67 L644.50,406.13 L645.00,403.80 L645.50,406.13 L646.00,407.36 L646.50,405.64 L647.00,405.82 L647.50,407.21 L648.00,407.82 L648.50,406.83 L649.00,406.59 L649.50,405.37 L650.00,407.43 L650.50,406.52 L651.00,406.33 L651.50,406.72 L652.00,407.03 L652.50,407.37 L653.00,406.12 L653.50,407.46 L654.00,408.01 L654.50,407.46 L655.00,406.91 L655.50,405.47 L656.00,402.80 L656.50,405.47 L657.00,407.85 L657.50,406.44 L658.00,406.67 L658.50,407.44 L659.00,406.54 L659.50,406.83 L660.00,407.68 L660.50,407.17 L661.00,407.85 L661.50,407.43 L662.00,407.47 L662.50,407.47 L663.00,406.72 L663.50,406.17 L664.00,407.65 L664.50,406.08 L665.00,407.49 L665.50,406.06 L666.00,403.80 L666.50,406.13 L667.00,407.61 L667.50,406.98 L668.00,407.30 L668.50,407.28 L669.00,407.42 L669.50,407.23 L670.00,407.89 L670.50,406.99 L671.00,407.33 L671.50,407.14 L672.00,407.49 L672.50,407.89 L673.00,407.53 L673.50,407.69 L674.00,406.80 L674.50,406.26 L675.00,406.30 L675.50,404.80 L676.00,401.80 L676.50,404.80 L677.00,407.42 L677.50,407.07 L678.00,406.93 L678.50,407.60 L679.00,406.64 L679.50,406.43 L680.00,405.81 L680.50,406.54 L681.00,405.76 L681.50,406.26 L682.00,406.21 L682.50,406.66 L683.00,406.33 L683.50,406.99 L684.00,405.88 L684.50,406.61 L685.00,406.16 L685.50,406.12 L686.00,406.94 L686.50,407.53 L687.00,407.65 L687.50,406.94 L688.00,406.24 L688.50,408.12 L689.00,407.07 L689.50,407.80 L690.00,406.53 L690.50,406.40 L691.00,406.89 L691.50,407.41 L692.00,406.29 L692.50,406.64 L693.00,406.87 L693.50,407.07 L694.00,406.10 L694.50,405.80 L695.00,407.48 L695.50,407.30 L696.00,407.34 L696.50,406.97 L697.00,406.80 L697.50,406.58 L698.00,408.01 L698.50,407.81 L699.00,406.36 L699.50,406.49 L700.00,407.84 L700.50,408.07 L701.00,407.22 L701.50,407.96 L702.00,407.00 L702.50,406.54 L702.60,410.80Z" fill="#1ec4f2"/>
<rect x="483.4" y="397.6" width="3.2" height="4.6" rx="1.6" stroke="#eed8f4" stroke-width="0.9" fill="none"/>
<path d="M482.3,401 q2.7,3.4 5.4,0 M485,403.3 v1.6" stroke="#eed8f4" stroke-width="0.9" fill="none"/>
<path d="M650.3,397.8 v6.6 M650.3,397.8 q0.6,2 2,2.6" stroke="#dde4f8" stroke-width="0.9" fill="none"/>
<ellipse cx="648.6" cy="404.5" rx="1.7" ry="1.2" stroke="#dde4f8" stroke-width="0.9" fill="none"/>
</svg>
<div class="t" style="left:491.5px;top:398.6px;font-size:6.6px;color:#f0e0f4">boiling.mp3</div>
<div class="t" style="left:655.5px;top:398.6px;font-size:6.6px;color:#e8ecfa">Swish.mp3</div>
<!-- playhead -->
<div class="a" style="left:424px;top:318px;width:1px;height:95px;background:#d9a521"></div>
<div class="a" style="left:403.9px;top:306.3px;width:41.4px;height:11.7px;background:#f6bd25;border-radius:1px"></div>
<div class="t" style="left:403.3px;top:307.6px;width:41.5px;text-align:center;font-size:9.4px;color:#3a3000;-webkit-text-stroke:0.2px #3a3000">00:02.1</div>
<!-- footer -->
<div class="t" style="left:51px;top:421.4px;font-size:7.8px;color:#b4b4b4">Video legth with audio: 00:16.0</div>
<div class="a" style="left:651px;top:417px;width:42px;height:16px;border:1.3px solid #d4a022"></div>
<div class="a" style="left:701px;top:417px;width:42px;height:16px;border:1.3px solid #d4a022"></div>
<div class="t" style="left:651px;top:422px;width:42px;text-align:center;font-size:7.6px;font-weight:bold;color:#d9a521">Save</div>
<div class="t" style="left:701px;top:422px;width:42px;text-align:center;font-size:7.6px;font-weight:bold;color:#d9a521">Cancel</div>

<!-- title -->
<div class="t" style="left:325px;top:454.5px;font-size:24.7px;color:#f4f4f4;letter-spacing:1.4px;-webkit-text-stroke:0.35px #f4f4f4">Audio Editor</div>

</body></html>
